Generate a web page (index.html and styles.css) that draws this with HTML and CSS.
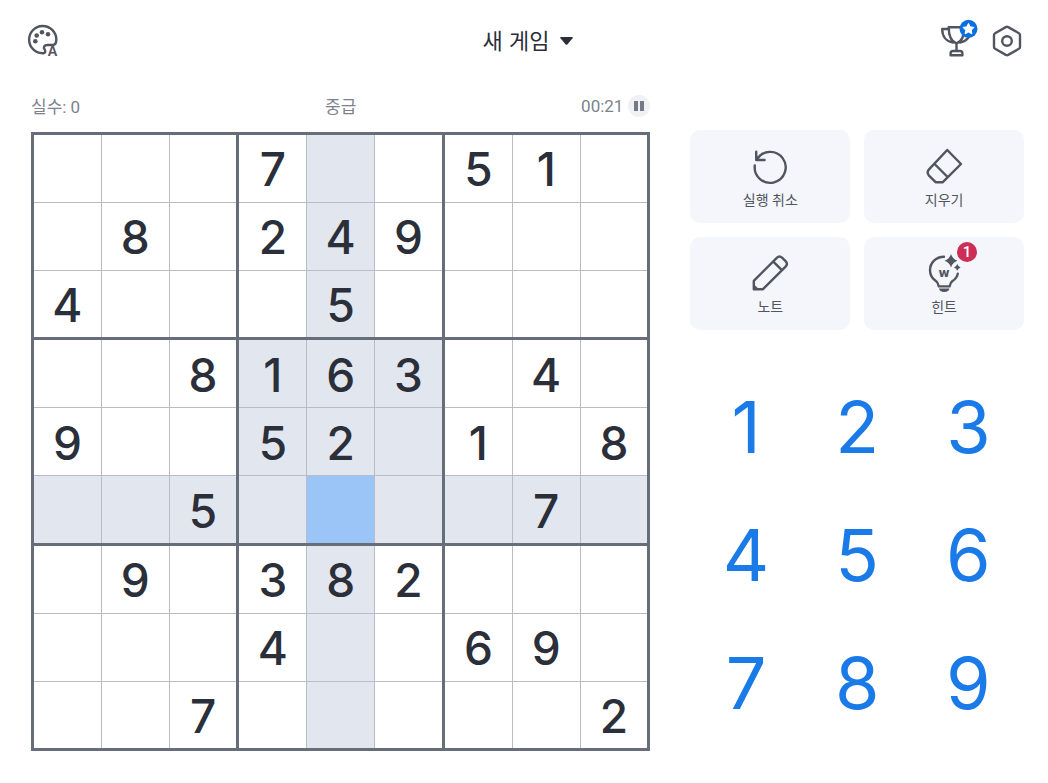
FILE: index.html
```html
<!doctype html>
<html lang="ko">
<head>
    <meta charset="UTF-8">
    <meta name="viewport" content="width=device-width, initial-scale=1">
    <title>스도쿠</title>
    <link rel="stylesheet" href="styles.css">
</head>
<body>
<header class="topbar">
    <div class="topbar-side">
        <button class="icon-button" aria-label="테마">
            <svg width="32" height="32" viewBox="0 0 32 32">
                <path class="line" d="M16.5 28.2A13.6 13.6 0 1 1 29.3 14.7C29.3 18 28.2 20 25.5 20H20.5C17 20 16.2 22.2 17.6 24.4C18.7 26.2 18.4 28 16.5 28.2Z"/>
                <g class="solid">
                    <circle cx="8.3" cy="16.3" r="2.3"/>
                    <circle cx="9.7" cy="10.5" r="2.3"/>
                    <circle cx="15" cy="7.2" r="2.3"/>
                    <circle cx="21" cy="9.3" r="2.3"/>
                </g>
                <text class="theme-letter" x="25.5" y="30.5">A</text>
            </svg>
        </button>
    </div>
    <div class="new-game">
        <select id="newGame" aria-label="새 게임">
            <option>새 게임</option>
            <option>쉬움</option>
            <option>중급</option>
            <option>어려움</option>
        </select>
        <svg class="caret" width="13" height="8" viewBox="0 0 13 8"><path d="M1 0H12Q13.5 0 12.5 1.2L7.3 7.4Q6.5 8.3 5.7 7.4L.5 1.2Q-.5 0 1 0Z"/></svg>
    </div>
    <div class="topbar-side topbar-right">
        <button class="icon-button" aria-label="트로피">
            <svg width="38" height="38" viewBox="0 2 38 38">
                <path class="line" d="M8.7 7.3H24.3C24.3 15 22 21.5 16.5 23.5C11 21.5 8.7 15 8.7 7.3ZM8.7 9H2.2C2.2 16 6 21.5 13 22.5M24.3 9H31C31 16 27 21.5 20 22.5M16.5 23.5V30.8M10.6 35.3V33.5Q10.6 31 13 31H20Q22.4 31 22.4 33.5V35.3Z"/>
                <circle class="trophy-badge" cx="28.5" cy="8.8" r="9"/>
                <path class="trophy-star" d="M28.5 3.4L30.2 6.8L34 7.4L31.3 10.1L31.9 13.8L28.5 12.1L25.1 13.8L25.7 10.1L23 7.4L26.8 6.8Z"/>
            </svg>
        </button>
        <button class="icon-button" aria-label="설정">
            <svg width="30" height="32" viewBox="0 0 30 32">
                <path class="line" d="M13.8 2.1Q15 1.5 16.2 2.1L26.9 8.2Q28 8.8 28 10V22Q28 23.2 26.9 23.8L16.2 29.9Q15 30.5 13.8 29.9L3.1 23.8Q2 23.2 2 22V10Q2 8.8 3.1 8.2Z"/>
                <circle class="line" cx="15" cy="16" r="4.8"/>
            </svg>
        </button>
    </div>
</header>

<main class="game">
    <section class="play">
        <div class="status">
            <span>실수: 0</span>
            <span class="level">중급</span>
            <span class="timer">
                <time>00:21</time>
                <button class="pause" aria-label="일시 정지">
                    <svg width="12" height="12" viewBox="0 0 12 12"><path d="M1 1H5V11H1ZM7 1H11V11H7Z"/></svg>
                </button>
            </span>
        </div>
        <div class="board" id="board"></div>
    </section>

    <aside class="controls">
        <div class="tools">
            <button class="tool">
                <svg width="36" height="36" viewBox="0 0 36 36">
                    <path class="line" d="M2.8 17.5A15.5 15.5 0 1 0 5 11.2M4.2 3.8V12H12.6"/>
                </svg>
                <span>실행 취소</span>
            </button>
            <button class="tool">
                <svg width="36" height="36" viewBox="0 0 36 36">
                    <path class="line" d="M21.2 2L35 16L16.8 34.2H9.6L3 27.6Q.3 24.5 3 21.4ZM8.6 16L21.6 29"/>
                </svg>
                <span>지우기</span>
            </button>
            <button class="tool">
                <svg width="36" height="36" viewBox="0 0 36 36">
                    <path class="line" d="M1.8 34.2V25.8L24.8 2.8Q27.5.2 30.3 2.8L33.6 6.1Q36.2 8.9 33.6 11.6L11 34.2ZM21.3 6.6L29.9 15.2"/>
                    <path class="solid" d="M1.2 28.5L7.5 34.8H1.2Z"/>
                </svg>
                <span>노트</span>
            </button>
            <button class="tool">
                <svg width="36" height="36" viewBox="0 0 36 36">
                    <path class="line" d="M18 1.7C10 1.7 4 7.6 4 15.3C4 21 7 24.2 10.2 26.3Q12 27.5 12.8 31.4H23.6Q24.4 27.5 26.2 26.3C29.2 24.4 31.2 22 31.8 18.6"/>
                    <path class="solid" d="M25 -1Q26.6 4.1 31.5 5.7Q26.6 7.3 25 12.4Q23.4 7.3 18.5 5.7Q23.4 4.1 25 -1ZM31.3 9Q32.2 11.5 34.6 12.4Q32.2 13.3 31.3 15.8Q30.4 13.3 28 12.4Q30.4 11.5 31.3 9ZM13 33.6H23.5Q23 37 18.2 37Q13.5 37 13 33.6Z"/>
                    <text class="bulb-letter" x="18" y="22">w</text>
                </svg>
                <span>힌트</span>
                <span class="hint-count">1</span>
            </button>
        </div>
        <div class="keypad">
            <button>1</button>
            <button>2</button>
            <button>3</button>
            <button>4</button>
            <button>5</button>
            <button>6</button>
            <button>7</button>
            <button>8</button>
            <button>9</button>
        </div>
    </aside>
</main>

<script src="board.js"></script>
</body>
</html>
```

FILE: styles.css
```css
* {
    box-sizing: border-box;
}

body {
    margin: 0;
    background-color: #fff;
    color: #51555f;
    font-family: Roboto, "Noto Sans CJK KR", sans-serif;
}

button, select {
    padding: 0;
    border: none;
    background: none;
    color: inherit;
    font: inherit;
    cursor: pointer;
}

svg {
    display: block;
    overflow: visible;
}

.line {
    fill: none;
    stroke: #51555f;
    stroke-width: 2.4;
    stroke-linecap: round;
    stroke-linejoin: round;
}

.solid {
    fill: #51555f;
}

/* top bar */
.topbar {
    display: flex;
    align-items: center;
    height: 82px;
    padding: 0 26px 0 27px;
}

.topbar-side {
    display: flex;
    flex: 1;
    align-items: center;
}

.topbar-right {
    justify-content: flex-end;
    gap: 14px;
}

.theme-letter {
    fill: #51555f;
    font: bold 14px "Liberation Sans", sans-serif;
    text-anchor: middle;
}

.trophy-badge {
    fill: #0b6fe4;
}

.trophy-star {
    fill: #fff;
    stroke: #fff;
    stroke-linejoin: round;
}

.new-game {
    position: relative;
    padding: 0 0 4px 6px;
    color: #2b2e38;
    font-family: "Noto Sans CJK KR", sans-serif;
}

.new-game select {
    display: block;
    appearance: none;
    height: 34px;
    padding-right: 24px;
    font-size: 22px;
}

.caret {
    position: absolute;
    top: 50%;
    right: 0;
    margin-top: -4px;
    fill: #2b2e38;
    pointer-events: none;
}

/* board and controls */
.game {
    display: grid;
    grid-template-columns: minmax(0, 13fr) minmax(0, 7fr);
    gap: 40px;
    padding: 0 24px 30px 31px;
}

.status {
    display: grid;
    grid-template-columns: 1fr auto 1fr;
    align-items: center;
    height: 50px;
    padding-bottom: 3px;
    color: #7d828e;
    font-size: 17px;
}

.timer {
    display: flex;
    align-items: center;
    justify-content: flex-end;
    gap: 5px;
}

.pause {
    display: grid;
    place-items: center;
    width: 22px;
    height: 22px;
    border-radius: 50%;
    background-color: #f0f1f4;
    fill: #737986;
}

.board {
    display: grid;
    grid-template-columns: repeat(3, 1fr);
    gap: 3px;
    aspect-ratio: 1;
    border: 3px solid #686d7a;
    background-color: #686d7a;
}

.box {
    display: grid;
    grid-template: repeat(3, 1fr) / repeat(3, 1fr);
    gap: 1px;
    background-color: #b9bcc8;
}

.cell {
    min-width: 0;
    padding-top: 2px;
    background-color: #fff;
    color: #2b2f39;
    font: 500 46px/1 Inter, sans-serif;
}

.cell.related {
    background-color: #e2e6ef;
}

.cell.selected {
    background-color: #9bc4f7;
}

.controls {
    padding-top: 48px;
}

.tools {
    display: grid;
    grid-template-columns: 1fr 1fr;
    gap: 14px;
}

.tool {
    position: relative;
    display: flex;
    flex-direction: column;
    align-items: center;
    gap: 6px;
    padding: 18px 0 13px;
    border-radius: 10px;
    background-color: #f4f6fb;
    font-size: 14px;
    line-height: 20px;
}

.bulb-letter {
    fill: #51555f;
    font: bold 12px "DejaVu Sans", sans-serif;
    text-anchor: middle;
}

.hint-count {
    position: absolute;
    top: 5px;
    left: calc(50% + 13px);
    width: 20px;
    height: 20px;
    border-radius: 50%;
    background-color: #cb2f58;
    color: #fff;
    font-size: 15px;
    font-weight: 500;
}

.keypad {
    display: grid;
    grid-template-columns: repeat(3, 1fr);
    margin-top: 33px;
}

.keypad button {
    height: 128px;
    color: #1a7be8;
    font: 400 72px/1 Inter, sans-serif;
}
```

FILE: board.js
```js
const puzzle = [
    "...7..51.",
    ".8.249...",
    "4...5....",
    "..8163.4.",
    "9..52.1.8",
    "..5....7.",
    ".9.382...",
    "...4..69.",
    "..7.....2",
];

const board = document.getElementById("board");
const cells = [];

function selectCell(row, col) {
    for (const cell of cells) {
        const sameBox = Math.floor(cell.row / 3) === Math.floor(row / 3)
            && Math.floor(cell.col / 3) === Math.floor(col / 3);
        const related = cell.row === row || cell.col === col || sameBox;
        cell.el.classList.toggle("related", related);
        cell.el.classList.toggle("selected", cell.row === row && cell.col === col);
    }
}

for (let b = 0; b < 9; b++) {
    const box = document.createElement("div");
    box.className = "box";
    for (let i = 0; i < 9; i++) {
        const row = Math.floor(b / 3) * 3 + Math.floor(i / 3);
        const col = (b % 3) * 3 + i % 3;
        const el = document.createElement("button");
        el.className = "cell";
        el.textContent = puzzle[row][col].replace(".", "");
        el.addEventListener("click", () => selectCell(row, col));
        cells.push({ el, row, col });
        box.appendChild(el);
    }
    board.appendChild(box);
}

selectCell(5, 4);
```
